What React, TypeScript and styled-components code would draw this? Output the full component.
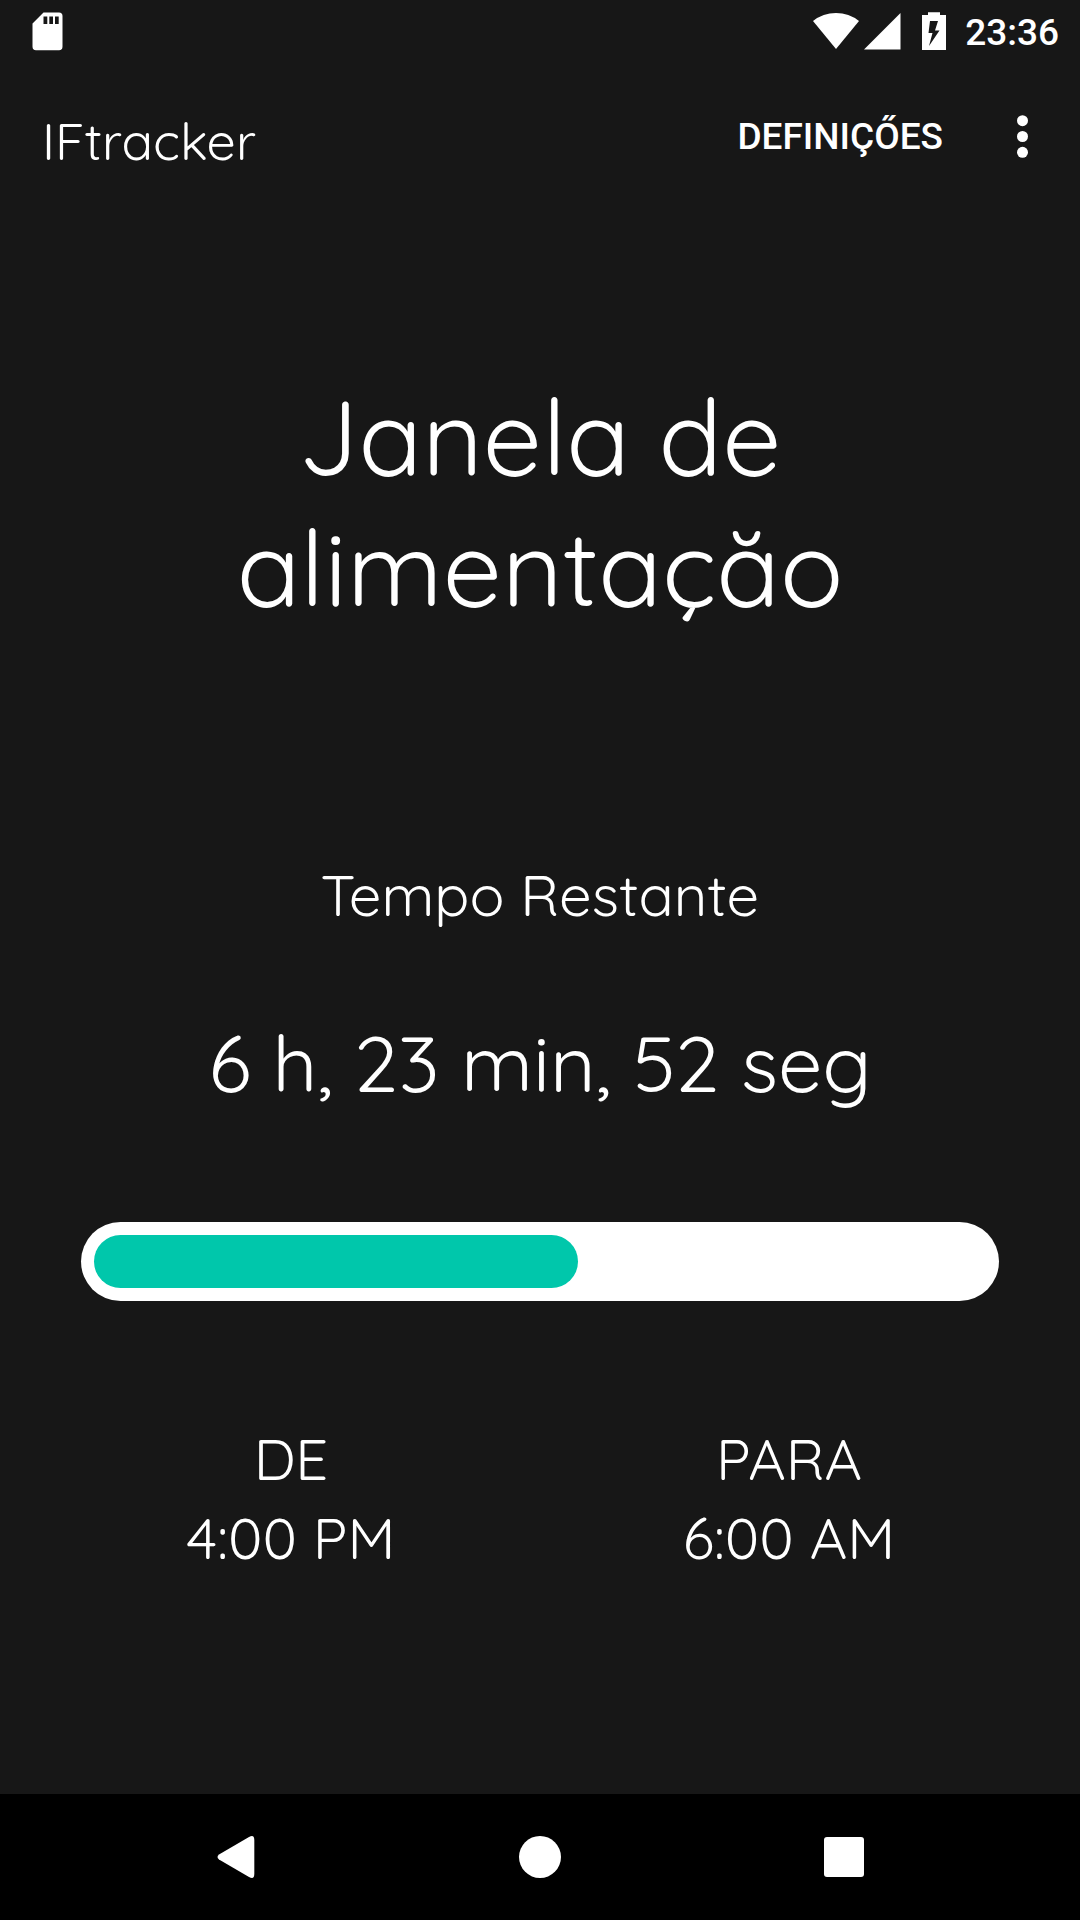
import React from "react";
import styled, { createGlobalStyle } from "styled-components";

const rounded = `Quicksand, Lato, "Open Sans", sans-serif`;
const system = `Roboto, "Noto Sans", sans-serif`;

const GlobalStyle = createGlobalStyle`
  *, *::before, *::after { box-sizing: border-box; }
  body { margin: 0; background: #171717; color: #fff; }
`;

const Screen = styled.div`
  min-height: 100vh;
  display: flex;
  flex-direction: column;
  background: #171717;
  font-family: ${rounded};
  font-weight: 400;
`;

const StatusBar = styled.div`
  height: 63px;
  padding: 0 21px 0 32px;
  display: flex;
  justify-content: space-between;
  align-items: center;
  font: 500 37px/43px ${system};
`;

const StatusIcons = styled.div`
  display: flex;
  align-items: center;
`;

const Clock = styled.time`
  padding-top: 2px;
`;

const Glyph = styled.svg<{ $gap?: number }>`
  display: block;
  fill: #fff;
  margin-right: ${(p) => p.$gap ?? 0}px;
`;

const Toolbar = styled.header`
  height: 147px;
  padding: 0 21px 0 42px;
  display: flex;
  align-items: center;
  justify-content: space-between;
`;

const AppName = styled.h1`
  margin: 0;
  padding-top: 9px;
  font-size: 52px;
  line-height: 66px;
  font-weight: 400;
`;

const Actions = styled.div`
  display: flex;
  align-items: center;
  gap: 42px;
`;

const PlainButton = styled.button`
  display: flex;
  align-items: center;
  justify-content: center;
  padding: 0;
  border: 0;
  background: none;
  color: inherit;
  cursor: pointer;
`;

const SettingsButton = styled(PlainButton)`
  font: 500 37px/43px ${system};
`;

const MenuButton = styled(PlainButton)`
  width: 74px;
  height: 105px;
`;

const Main = styled.main`
  flex: 1;
  padding: 160px 42px 0;
  text-align: center;
`;

const WindowTitle = styled.h2`
  max-width: 720px;
  margin: 0 auto 227px;
  font-size: 105px;
  line-height: 131px;
  font-weight: 400;
`;

const Caption = styled.p`
  margin: 0 0 82px;
  font-size: 58px;
  line-height: 72px;
`;

const Remaining = styled.p`
  margin: 0 0 110px;
  font-size: 79px;
  line-height: 99px;
`;

const ProgressWrap = styled.div`
  padding: 0 39px;
`;

const Progress = styled.progress`
  appearance: none;
  display: block;
  width: 100%;
  height: 79px;
  padding: 13px;
  border: 0;
  border-radius: 40px;
  background: #fff;

  &::-webkit-progress-bar {
    background: transparent;
  }
  &::-webkit-progress-value {
    background: #00c7ab;
    border-radius: 27px;
  }
`;

const Range = styled.dl`
  margin: 118px 0 0;
  display: grid;
  grid-template-columns: 1fr 1fr;
  font-size: 58px;
  line-height: 79px;
`;

const Term = styled.dt`
  margin: 0;
`;

const Time = styled.dd`
  margin: 0;
`;

const NavBar = styled.nav`
  height: 126px;
  display: flex;
  align-items: center;
  justify-content: center;
  gap: 94px;
  background: #000;
`;

const NavButton = styled(PlainButton)`
  width: 210px;
  height: 126px;
`;

const windowSeconds = 14 * 3600;
const left = { h: 6, min: 23, seg: 52 };
const leftSeconds = left.h * 3600 + left.min * 60 + left.seg;

export default function App() {
  return (
    <Screen>
      <GlobalStyle />
      <StatusBar>
        <Glyph width="31" height="39" viewBox="0 0 31 39">
          <path
            fillRule="evenodd"
            d="M11.500 0.500H27Q30.500 0.500 30.500 4V34.500Q30.500 38.300 27 38.300H4Q0.500 38.300 0.500 34.500V11.500ZM11.500 4.500V12H15.300V4.500ZM17.300 4.500V12H21V4.500ZM23 4.500V12H26.700V4.500Z"
          />
        </Glyph>
        <StatusIcons>
          <Glyph $gap={5} width="46" height="37" viewBox="0 0 46 37">
            <path d="M23 36L0 8Q10 0 23 0T46 8Z" />
          </Glyph>
          <Glyph $gap={21} width="37" height="37" viewBox="0 0 37 37">
            <path d="M36.500 0V36.500H0Z" />
          </Glyph>
          <Glyph $gap={19} width="24" height="39" viewBox="0 0 24 39">
            <path
              fillRule="evenodd"
              d="M6 0.300H18V3H24V38H0V3H6ZM8 9L6.500 21H10.500L7 34L17.500 18.500H13L16 9Z"
            />
          </Glyph>
          <Clock>23:36</Clock>
        </StatusIcons>
      </StatusBar>

      <Toolbar>
        <AppName>IFtracker</AppName>
        <Actions>
          <SettingsButton type="button">DEFINIÇŐES</SettingsButton>
          <MenuButton type="button" aria-label="Menu">
            <Glyph width="12" height="43" viewBox="0 0 12 43">
              <circle cx="6.500" cy="5.700" r="5.500" />
              <circle cx="6.500" cy="21.500" r="5.500" />
              <circle cx="6.500" cy="37.300" r="5.500" />
            </Glyph>
          </MenuButton>
        </Actions>
      </Toolbar>

      <Main>
        <WindowTitle>Janela de alimentaçăo</WindowTitle>
        <Caption id="remaining">Tempo Restante</Caption>
        <Remaining>
          {left.h} h, {left.min} min, {left.seg} seg
        </Remaining>
        <ProgressWrap>
          <Progress
            aria-labelledby="remaining"
            max={windowSeconds}
            value={windowSeconds - leftSeconds}
          />
        </ProgressWrap>
        <Range>
          <div>
            <Term>DE</Term>
            <Time>4:00 PM</Time>
          </div>
          <div>
            <Term>PARA</Term>
            <Time>6:00 AM</Time>
          </div>
        </Range>
      </Main>

      <NavBar>
        <NavButton type="button" aria-label="Back">
          <Glyph width="38" height="42" viewBox="0 0 38 42">
            <path d="M32 1Q37.300 -2 37.300 4V38Q37.300 44 32 41L2 23.500Q-1 21 2 18.500Z" />
          </Glyph>
        </NavButton>
        <NavButton type="button" aria-label="Home">
          <Glyph width="42" height="42" viewBox="0 0 42 42">
            <circle cx="21" cy="21" r="21" />
          </Glyph>
        </NavButton>
        <NavButton type="button" aria-label="Overview">
          <Glyph width="40" height="40" viewBox="0 0 40 40">
            <rect width="40" height="40" rx="3" />
          </Glyph>
        </NavButton>
      </NavBar>
    </Screen>
  );
}
